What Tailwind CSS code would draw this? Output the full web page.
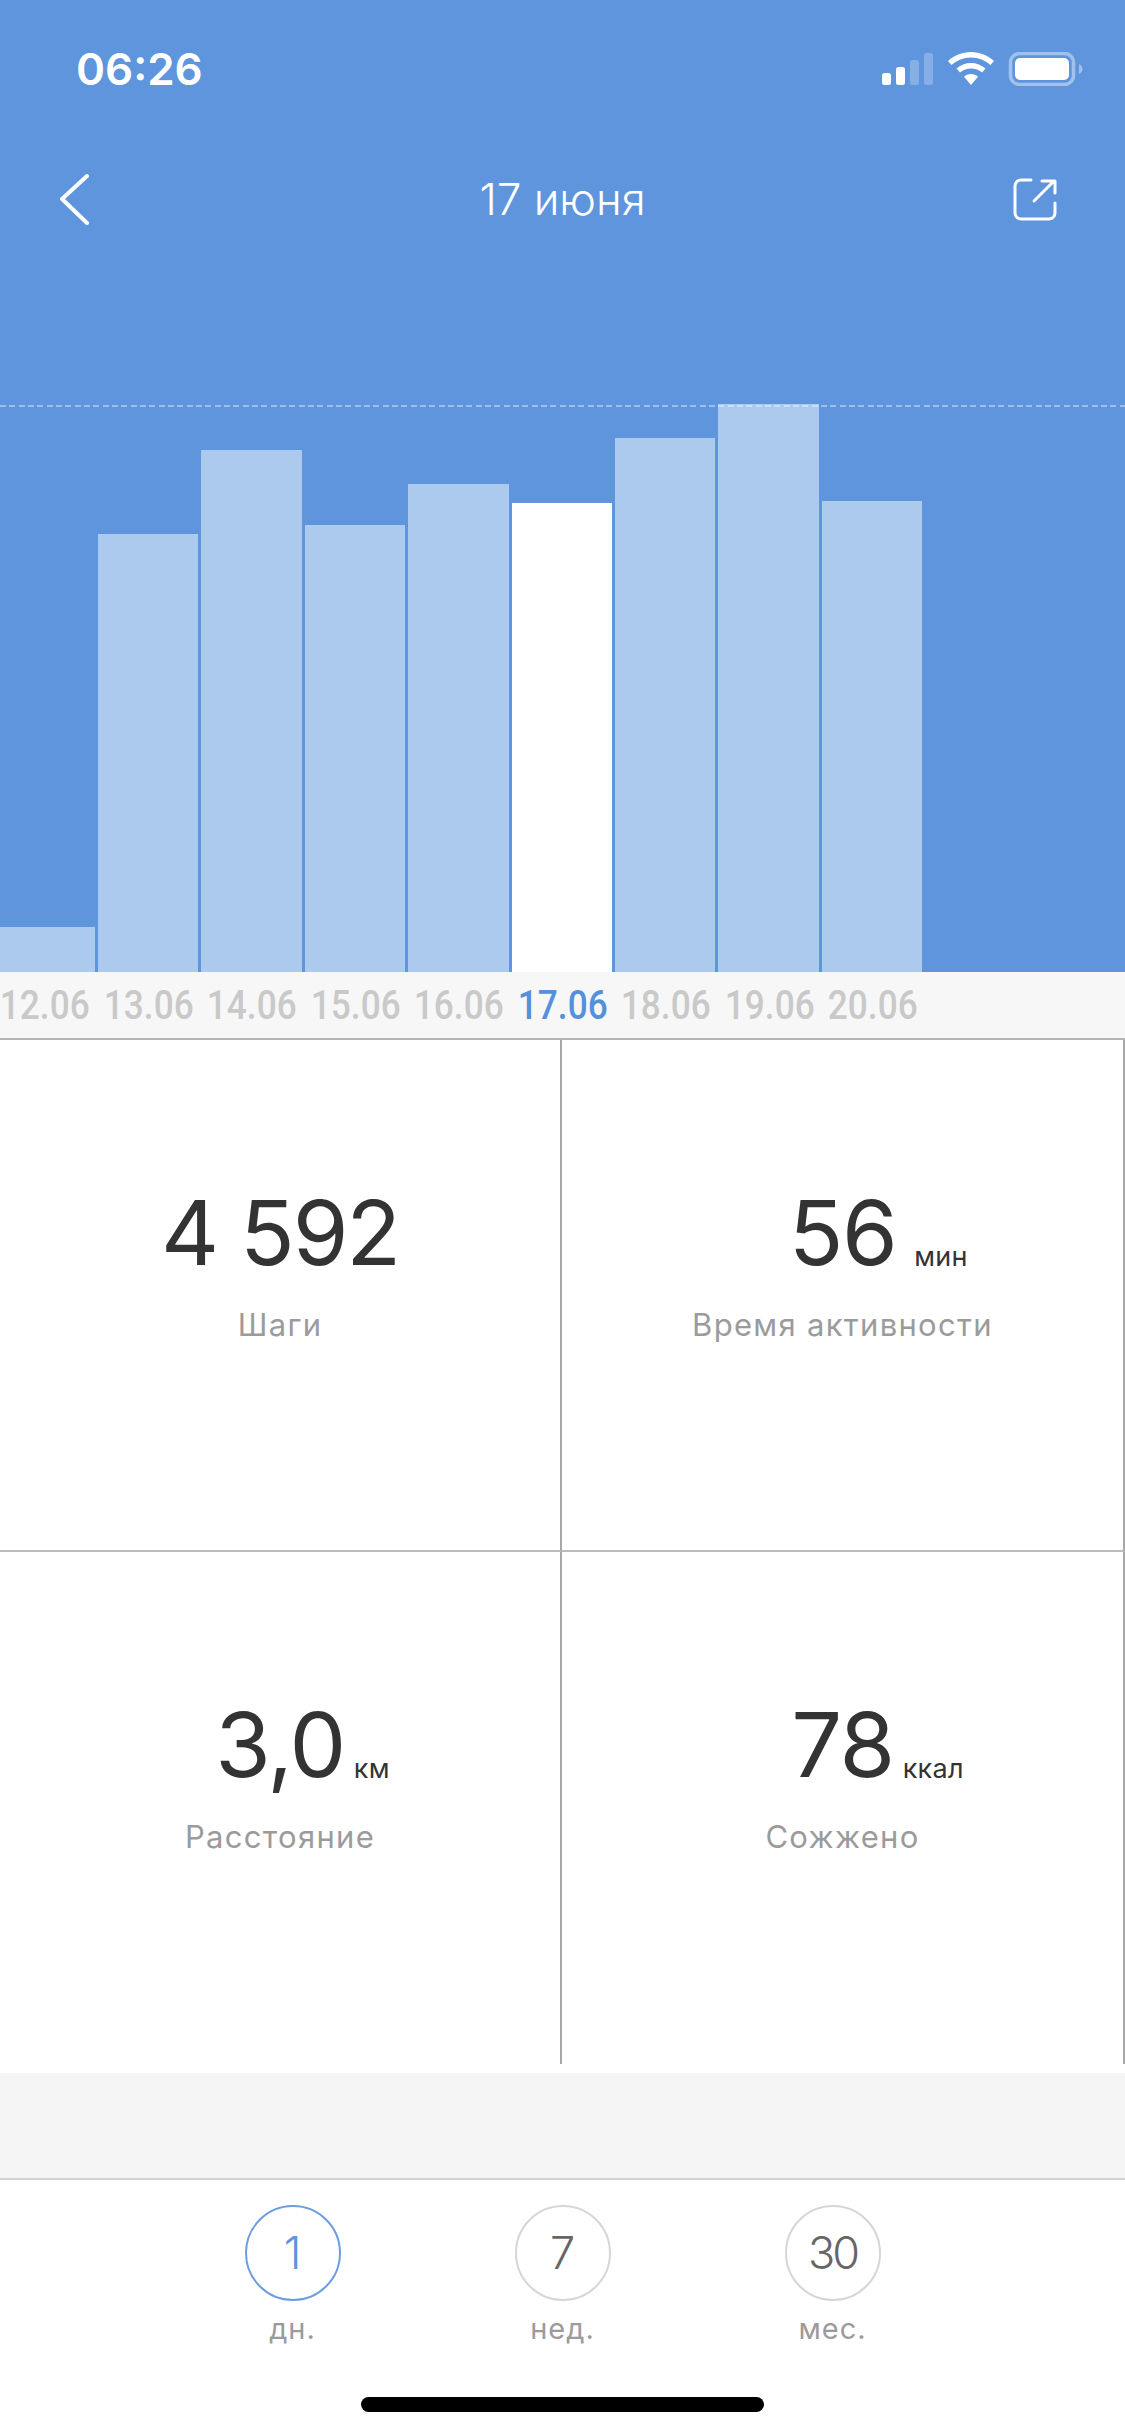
<!DOCTYPE html>
<html lang="ru">

<head>
    <meta charset="UTF-8">
    <meta name="viewport" content="width=device-width, initial-scale=1.0">
    <title>17 июня</title>
    <script src="https://cdn.jsdelivr.net/npm/@tailwindcss/browser@4"></script>
</head>

<body class="w-[1125px] h-[2436px] overflow-hidden bg-white font-['Inter',sans-serif]">

    <!-- Blue chart header -->
    <section class="relative h-[972px] flex flex-col bg-[#5e95dd] text-white">
        <!-- Status bar -->
        <div class="flex items-center justify-between pt-[52px] pl-[76px] pr-[42px] h-[86px]">
            <span class="text-[44px] leading-[34px] font-semibold">06:26</span>
            <svg width="201" height="34" viewBox="882 52 201 34" fill="#fff">
                <rect x="882" y="73" width="9" height="12" rx="2.5" />
                <rect x="896" y="67" width="9" height="18" rx="2.5" />
                <rect x="910" y="60" width="9" height="25" rx="2.5" opacity=".25" />
                <rect x="924" y="53" width="9" height="32" rx="2.5" opacity=".25" />
                <path d="M971 52c9 0 17 3.5 23 9l-3.5 4c-5-4.5-12-7.5-19.5-7.5s-14.5 3-19.5 7.5l-3.5-4c6-5.5 14-9 23-9z" />
                <path d="M971 63c5.5 0 10.5 2 14.5 5.5l-3.5 4c-3-2.5-7-4-11-4s-8 1.5-11 4l-3.5-4c4-3.5 9-5.5 14.5-5.5z" />
                <path d="M971 74c2.8 0 5.2 1 7 2.8l-7 8.2-7-8.2c1.8-1.8 4.2-2.8 7-2.8z" />
                <rect x="1010.5" y="53.5" width="63" height="31" rx="9" fill="none" stroke="#fff" stroke-width="3.5" opacity=".42" />
                <rect x="1015" y="58" width="54" height="22" rx="5" />
                <path d="M1079 64c2 1 3.5 3 3.5 5s-1.5 4-3.5 5z" opacity=".42" />
            </svg>
        </div>

        <!-- Nav -->
        <div class="mt-[64px] h-[98px] grid grid-cols-[1fr_auto_1fr] items-center px-[59px]">
            <svg width="32" height="52" viewBox="58 173 32 52" fill="none" stroke="#fff" stroke-width="4" stroke-linecap="round" stroke-linejoin="round">
                <path d="M86 176 L61 199 L86 223" />
            </svg>
            <span class="text-[44px] leading-[96px] font-light">17 июня</span>
            <svg class="justify-self-end mr-[8px]" width="46" height="44" viewBox="1012 175 46 44" fill="none" stroke="#fff" stroke-width="3" stroke-linecap="round" stroke-linejoin="round">
                <path d="M1031 178 H1021 a6 6 0 0 0 -6 6 V211 a6 6 0 0 0 6 6 H1049 a6 6 0 0 0 6 -6 V201" />
                <path d="M1034 199 L1054 179 M1042 179 H1055 V191" />
            </svg>
        </div>

        <!-- Bars -->
        <div class="flex-1 flex items-end gap-[3px] ml-[-5.4px]">
            <div class="w-[100.4px] h-[45px] bg-[#acc9ee]"></div>
            <div class="w-[100.4px] h-[438px] bg-[#acc9ee]"></div>
            <div class="w-[100.4px] h-[522px] bg-[#acc9ee]"></div>
            <div class="w-[100.4px] h-[447px] bg-[#acc9ee]"></div>
            <div class="w-[100.4px] h-[488px] bg-[#acc9ee]"></div>
            <div class="w-[100.4px] h-[469px] bg-white"></div>
            <div class="w-[100.4px] h-[534px] bg-[#acc9ee]"></div>
            <div class="w-[100.4px] h-[568px] bg-[#acc9ee]"></div>
            <div class="w-[100.4px] h-[471px] bg-[#acc9ee]"></div>
        </div>

        <!-- Goal line -->
        <div class="absolute left-0 right-0 top-[405px] h-[2px] bg-[repeating-linear-gradient(90deg,rgba(255,255,255,.4)_0_6px,transparent_6px_9.33px)]"></div>
    </section>

    <!-- Dates -->
    <div class="h-[66px] overflow-hidden bg-[#f7f7f7] font-['Roboto',sans-serif] font-medium text-[40px] leading-[68px] text-[#c9c9c9] text-center">
        <div class="flex ml-[-6.7px]">
            <span class="w-[103.5px] shrink-0 scale-x-[.88]">12.06</span>
            <span class="w-[103.5px] shrink-0 scale-x-[.88]">13.06</span>
            <span class="w-[103.5px] shrink-0 scale-x-[.88]">14.06</span>
            <span class="w-[103.5px] shrink-0 scale-x-[.88]">15.06</span>
            <span class="w-[103.5px] shrink-0 scale-x-[.88]">16.06</span>
            <span class="w-[103.5px] shrink-0 scale-x-[.88] text-[#5590db]">17.06</span>
            <span class="w-[103.5px] shrink-0 scale-x-[.88]">18.06</span>
            <span class="w-[103.5px] shrink-0 scale-x-[.88]">19.06</span>
            <span class="w-[103.5px] shrink-0 scale-x-[.88]">20.06</span>
        </div>
    </div>

    <!-- Stats -->
    <div class="grid grid-cols-[562px_563px] border-t-2 border-[#b4b4b4]">
        <div class="h-[512px] pt-[148px] flex flex-col items-center border-r-2 border-b-2 border-r-[#a8a8a8] border-b-[#bcbcbc]">
            <span class="text-[90px] leading-[90px] text-[#333] tracking-[-2.2px]">4 592</span>
            <span class="mt-[32px] text-[31px] leading-[30px] text-[#9b9b9b] tracking-[1.3px]">Шаги</span>
        </div>
        <div class="h-[512px] pt-[148px] flex flex-col items-center border-r-2 border-b-2 border-r-[#a8a8a8] border-b-[#bcbcbc]">
            <span class="relative text-[90px] leading-[90px] text-[#333] tracking-[-1.5px]">56
                <span class="absolute left-full bottom-[8.5px] ml-[18px] text-[27px] leading-[26px] tracking-[0.3px]">мин</span>
            </span>
            <span class="mt-[32px] text-[31px] leading-[30px] text-[#9b9b9b] tracking-[1.3px]">Время активности</span>
        </div>
        <div class="h-[512px] pt-[148px] flex flex-col items-center border-r-2 border-r-[#a8a8a8]">
            <span class="relative text-[90px] leading-[90px] text-[#333] tracking-[-1.5px]">3,0
                <span class="absolute left-full bottom-[8.5px] ml-[9px] text-[27px] leading-[26px] tracking-[0.3px]">км</span>
            </span>
            <span class="mt-[32px] text-[31px] leading-[30px] text-[#9b9b9b] tracking-[1.3px]">Расстояние</span>
        </div>
        <div class="h-[512px] pt-[148px] flex flex-col items-center border-r-2 border-r-[#a8a8a8]">
            <span class="relative text-[90px] leading-[90px] text-[#333] tracking-[-1.5px]">78
                <span class="absolute left-full bottom-[8.5px] ml-[9px] text-[27px] leading-[26px] tracking-[0.3px]">ккал</span>
            </span>
            <span class="mt-[32px] text-[31px] leading-[30px] text-[#9b9b9b] tracking-[1.3px]">Сожжено</span>
        </div>
    </div>

    <!-- Spacer -->
    <div class="mt-[9px] h-[107px] bg-[#f5f5f5] border-b-2 border-[#d2d2d2]"></div>

    <!-- Range switch -->
    <div class="pt-[25px] flex justify-center">
        <div class="w-[270px] flex flex-col items-center">
            <div class="w-[96px] h-[96px] rounded-full border-2 border-[#6c9edf] flex items-center justify-center text-[45px] font-light text-[#5e95dd]">1</div>
            <span class="mt-[14px] text-[29px] leading-[28px] text-[#9b9b9b] tracking-[1px]">дн.</span>
        </div>
        <div class="w-[270px] flex flex-col items-center">
            <div class="w-[96px] h-[96px] rounded-full border-2 border-[#d6d6d6] flex items-center justify-center text-[45px] font-light text-[#666]">7</div>
            <span class="mt-[14px] text-[29px] leading-[28px] text-[#9b9b9b] tracking-[1px]">нед.</span>
        </div>
        <div class="w-[270px] flex flex-col items-center">
            <div class="w-[96px] h-[96px] rounded-full border-2 border-[#d6d6d6] flex items-center justify-center text-[45px] font-light text-[#666] tracking-[-3px]">30</div>
            <span class="mt-[14px] text-[29px] leading-[28px] text-[#9b9b9b] tracking-[1px]">мес.</span>
        </div>
    </div>

    <!-- Home indicator -->
    <div class="mt-[54px] mx-auto w-[403px] h-[15px] rounded-full bg-black"></div>

</body>

</html>
